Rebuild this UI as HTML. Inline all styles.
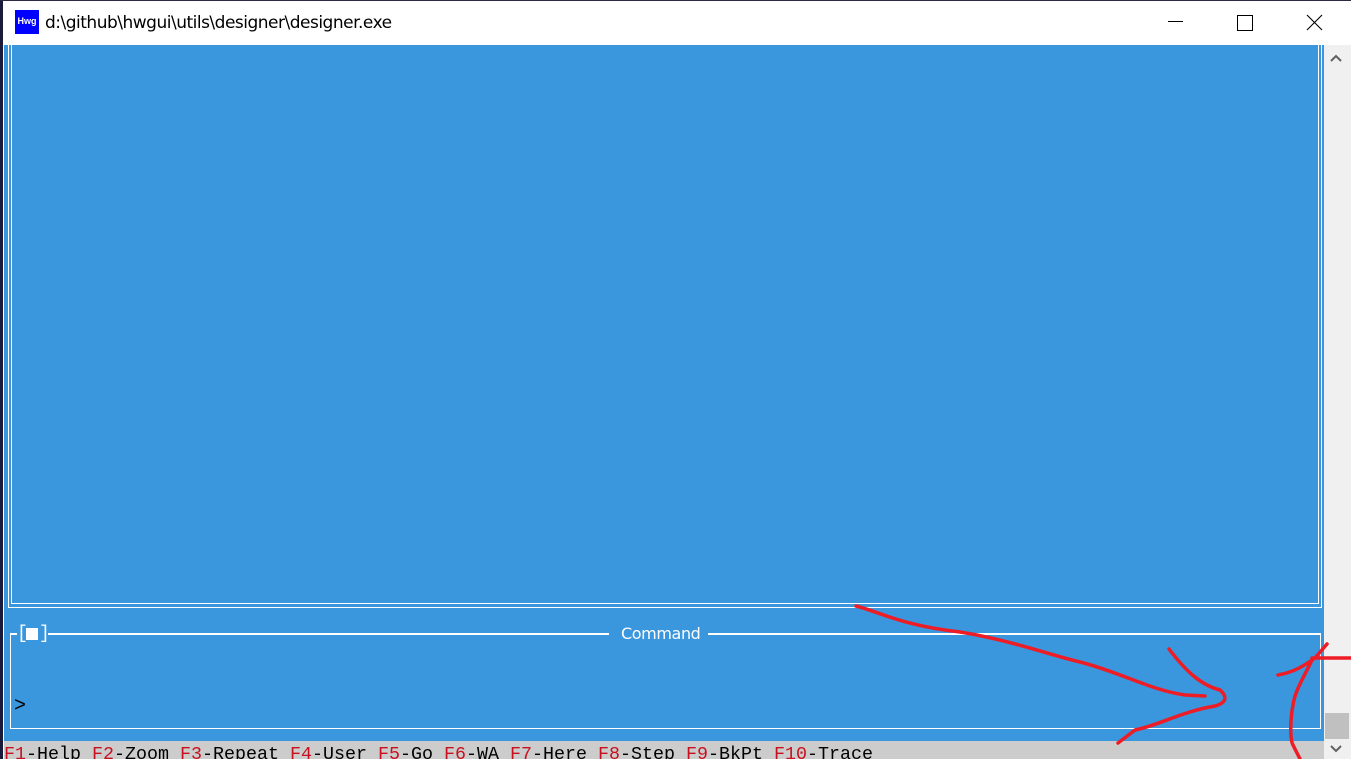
<!DOCTYPE html>
<html><head><style>
html,body{margin:0;padding:0;width:1351px;height:759px;overflow:hidden;background:#fff;position:relative;font-family:"Liberation Sans",sans-serif}
.a{position:absolute}
</style></head><body>
<div class="a" style="left:0;top:0;width:3px;height:759px;background:#1a1a3a"></div>
<div class="a" style="left:0;top:0;width:1351px;height:1px;background:#2a2a40"></div>
<div class="a" style="left:15px;top:10px;width:24px;height:24px;background:#0000ff;color:#fff;font-size:9px;line-height:22px;text-align:center;font-weight:bold">Hwg</div>
<div class="a" style="left:45px;top:13px;font-size:17px;color:#000;font-family:'DejaVu Sans',sans-serif;letter-spacing:-0.5px">d:\github\hwgui\utils\designer\designer.exe</div>
<div class="a" style="left:1168px;top:21px;width:15px;height:1px;background:#000"></div>
<div class="a" style="left:1237px;top:15px;width:14px;height:14px;border:1px solid #000"></div>
<svg class="a" style="left:1306px;top:14px" width="17" height="17"><path d="M1 1L16 16M16 1L1 16" stroke="#000" stroke-width="1.1"/></svg>
<div class="a" style="left:4px;top:45px;width:1320px;height:696px;background:#3a96dd"></div>
<div class="a" style="left:8px;top:40px;width:1312px;height:567px;border:1px solid #fff;border-top:none"></div>
<div class="a" style="left:11px;top:40px;width:1306px;height:563px;border:1px solid #fff;border-top:none"></div>
<div class="a" style="left:10px;top:633px;width:1309px;height:95px;border:1px solid #fff;border-top:none"></div>
<div class="a" style="left:10px;top:633px;width:7px;height:2px;background:#fff"></div>
<div class="a" style="left:48px;top:633px;width:561px;height:2px;background:#fff"></div>
<div class="a" style="left:708px;top:633px;width:612px;height:2px;background:#fff"></div>
<div class="a" style="left:17px;top:624px;color:#fff;font-family:'Liberation Mono',monospace;font-size:18px;line-height:20px">[</div>
<div class="a" style="left:26px;top:628px;width:12px;height:12px;background:#fff"></div>
<div class="a" style="left:39px;top:624px;color:#fff;font-family:'Liberation Mono',monospace;font-size:18px;line-height:20px">]</div>
<div class="a" style="left:621px;top:624px;color:#fff;font-size:16px;font-family:'DejaVu Sans',sans-serif;letter-spacing:-0.4px">Command</div>
<div class="a" style="left:14px;top:695px;color:#000;font-family:'Liberation Mono',monospace;font-size:20px">&gt;</div>
<div class="a" style="left:4px;top:741px;width:1320px;height:18px;background:#cccccc"></div>
<div class="a" style="left:4px;top:743px;font-family:'Liberation Mono',monospace;font-size:18.33px;line-height:24px;color:#000;white-space:pre"><span style="color:#c8101e">F1</span>-Help <span style="color:#c8101e">F2</span>-Zoom <span style="color:#c8101e">F3</span>-Repeat <span style="color:#c8101e">F4</span>-User <span style="color:#c8101e">F5</span>-Go <span style="color:#c8101e">F6</span>-WA <span style="color:#c8101e">F7</span>-Here <span style="color:#c8101e">F8</span>-Step <span style="color:#c8101e">F9</span>-BkPt <span style="color:#c8101e">F10</span>-Trace</div>
<div class="a" style="left:1324px;top:45px;width:27px;height:714px;background:#f0f0f0"></div>
<div class="a" style="left:1325px;top:713px;width:24px;height:26px;background:#c0c0c0"></div>
<svg class="a" style="left:1328px;top:52px" width="16" height="12"><path d="M3 9L8 4L13 9" stroke="#606060" stroke-width="2" fill="none"/></svg>
<svg class="a" style="left:1328px;top:743px" width="16" height="12"><path d="M3 3L8 8L13 3" stroke="#606060" stroke-width="2" fill="none"/></svg>
<svg class="a" style="left:0;top:0" width="1351" height="759">
<g stroke="#ee1c24" stroke-width="3.5" fill="none" stroke-linecap="round" stroke-linejoin="round">
<path d="M856 606 C880 612 900 625 960 632 C1010 640 1050 655 1080 662 C1120 672 1150 690 1185 695 L1205 696"/>
<path d="M1169 649 C1185 670 1200 685 1220 690 C1228 697 1226 703 1215 706 C1180 712 1160 725 1135 730 L1118 743"/>
<path d="M1278 675 C1295 672 1305 665 1315 658 L1327 644 M1312 658 L1351 658"/>
<path d="M1312 660 C1305 675 1295 690 1293 705 C1290 720 1290 740 1293 745 L1300 759"/>
</g></svg>
</body></html>
